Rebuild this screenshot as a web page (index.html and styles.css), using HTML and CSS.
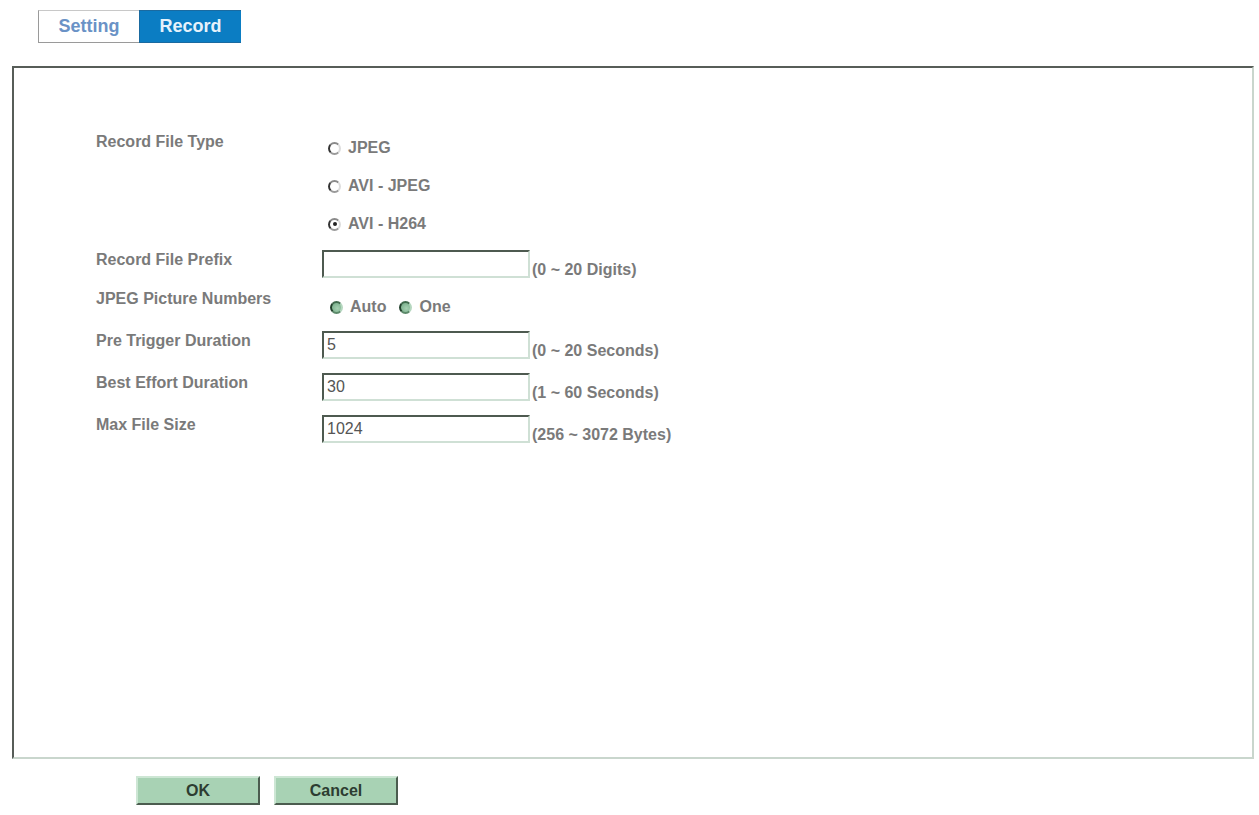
FILE: index.html
```html
<!DOCTYPE html>
<html lang="en">
<head>
    <meta charset="UTF-8">
    <title>Record</title>
    <link rel="stylesheet" href="styles.css">
</head>
<body>
    <div class="tabs">
        <a class="tab">Setting</a>
        <a class="tab active">Record</a>
    </div>

    <div class="panel">
        <div class="row row-type">
            <div class="label">Record File Type</div>
            <div class="field radio-list">
                <label class="opt"><input type="radio" name="type"> JPEG</label>
                <label class="opt"><input type="radio" name="type"> AVI - JPEG</label>
                <label class="opt"><input type="radio" name="type" checked> AVI - H264</label>
            </div>
        </div>
        <div class="row row-prefix">
            <div class="label">Record File Prefix</div>
            <div class="field">
                <input class="text" type="text" value="">
                <span class="hint">(0 ~ 20 Digits)</span>
            </div>
        </div>
        <div class="row">
            <div class="label">JPEG Picture Numbers</div>
            <div class="field radio-inline">
                <label class="opt"><input class="green" type="radio" name="num"> Auto</label>
                <label class="opt"><input class="green" type="radio" name="num"> One</label>
            </div>
        </div>
        <div class="row">
            <div class="label">Pre Trigger Duration</div>
            <div class="field">
                <input class="text" type="text" value="5">
                <span class="hint">(0 ~ 20 Seconds)</span>
            </div>
        </div>
        <div class="row">
            <div class="label">Best Effort Duration</div>
            <div class="field">
                <input class="text" type="text" value="30">
                <span class="hint">(1 ~ 60 Seconds)</span>
            </div>
        </div>
        <div class="row">
            <div class="label">Max File Size</div>
            <div class="field">
                <input class="text" type="text" value="1024">
                <span class="hint">(256 ~ 3072 Bytes)</span>
            </div>
        </div>
    </div>

    <div class="buttons">
        <button class="btn">OK</button>
        <button class="btn">Cancel</button>
    </div>
</body>
</html>
```

FILE: styles.css
```css
* {
    margin: 0;
    padding: 0;
    box-sizing: border-box;
}

body {
    background: #fff;
    font-family: 'Liberation Sans', Arial, sans-serif;
    font-size: 16px;
    font-weight: bold;
    color: #7a7a7a;
}

.tabs {
    display: flex;
    margin: 10px 0 0 38px;
}

.tab {
    display: flex;
    align-items: center;
    justify-content: center;
    width: 101px;
    height: 33px;
    font-size: 18px;
    font-weight: bold;
    color: #6a92c6;
    border: 1px solid #9a9a9a;
    border-top-color: #c8c8c8;
    border-right: none;
    background: #fff;
}

.tab.active {
    width: 102px;
    color: #e6f2fb;
    background: #0b7dc3;
    border-color: #1a6aa0;
}

.panel {
    margin: 23px 5px 0 12px;
    height: 693px;
    border: 2px solid #c9d6cd;
    border-top-color: #575d58;
    border-left-color: #575d58;
    padding: 64px 0 0 82px;
}

.row {
    display: flex;
    padding-bottom: 14px;
}

.row-type {
    padding-bottom: 16px;
}

.row-prefix {
    padding-bottom: 11px;
}

.label {
    width: 226px;
    line-height: 20px;
}

.field {
    display: flex;
    align-items: flex-end;
}

.radio-list {
    flex-direction: column;
    align-items: flex-start;
    gap: 18px;
    padding: 6px 0 0 6px;
}

.radio-inline {
    gap: 13px;
    padding: 8px 0 0 8px;
}

.opt {
    display: flex;
    align-items: center;
    gap: 7px;
    line-height: 20px;
    white-space: nowrap;
}

.opt input {
    appearance: none;
    width: 13px;
    height: 13px;
    border-radius: 50%;
    border: 2px solid #dcdcdc;
    border-left-color: #333;
    border-top-color: #8a8a8a;
    border-bottom-color: #9a9a9a;
    background: #fff;
    position: relative;
}

.opt input:checked::after {
    content: '';
    position: absolute;
    left: 2.5px;
    top: 2.5px;
    width: 4px;
    height: 4px;
    border-radius: 50%;
    background: #222;
}

.opt input.green {
    background: radial-gradient(circle at 60% 60%, #a6d1b2, #6fa783);
    border-color: #b5d7bf;
    border-left-color: #22402c;
    border-top-color: #3f6a4c;
    border-bottom-color: #5c8a6a;
}

.text {
    width: 208px;
    height: 28px;
    border: 2px solid #cfe0d5;
    border-top-color: #4e5a50;
    border-left-color: #4e5a50;
    padding: 0 3px;
    font-family: 'Liberation Sans', Arial, sans-serif;
    font-size: 16px;
    color: #555;
    outline: none;
}

.hint {
    margin-left: 2px;
    line-height: 16px;
}

.buttons {
    display: flex;
    gap: 14px;
    margin: 17px 0 0 136px;
}

.btn {
    width: 124px;
    height: 29px;
    background: #a8d2b4;
    border: 2px solid #4b5c4f;
    border-top-color: #cde6d4;
    border-left-color: #cde6d4;
    font-family: 'Liberation Sans', Arial, sans-serif;
    font-size: 16px;
    font-weight: bold;
    color: #2d3d31;
    cursor: pointer;
}
```
